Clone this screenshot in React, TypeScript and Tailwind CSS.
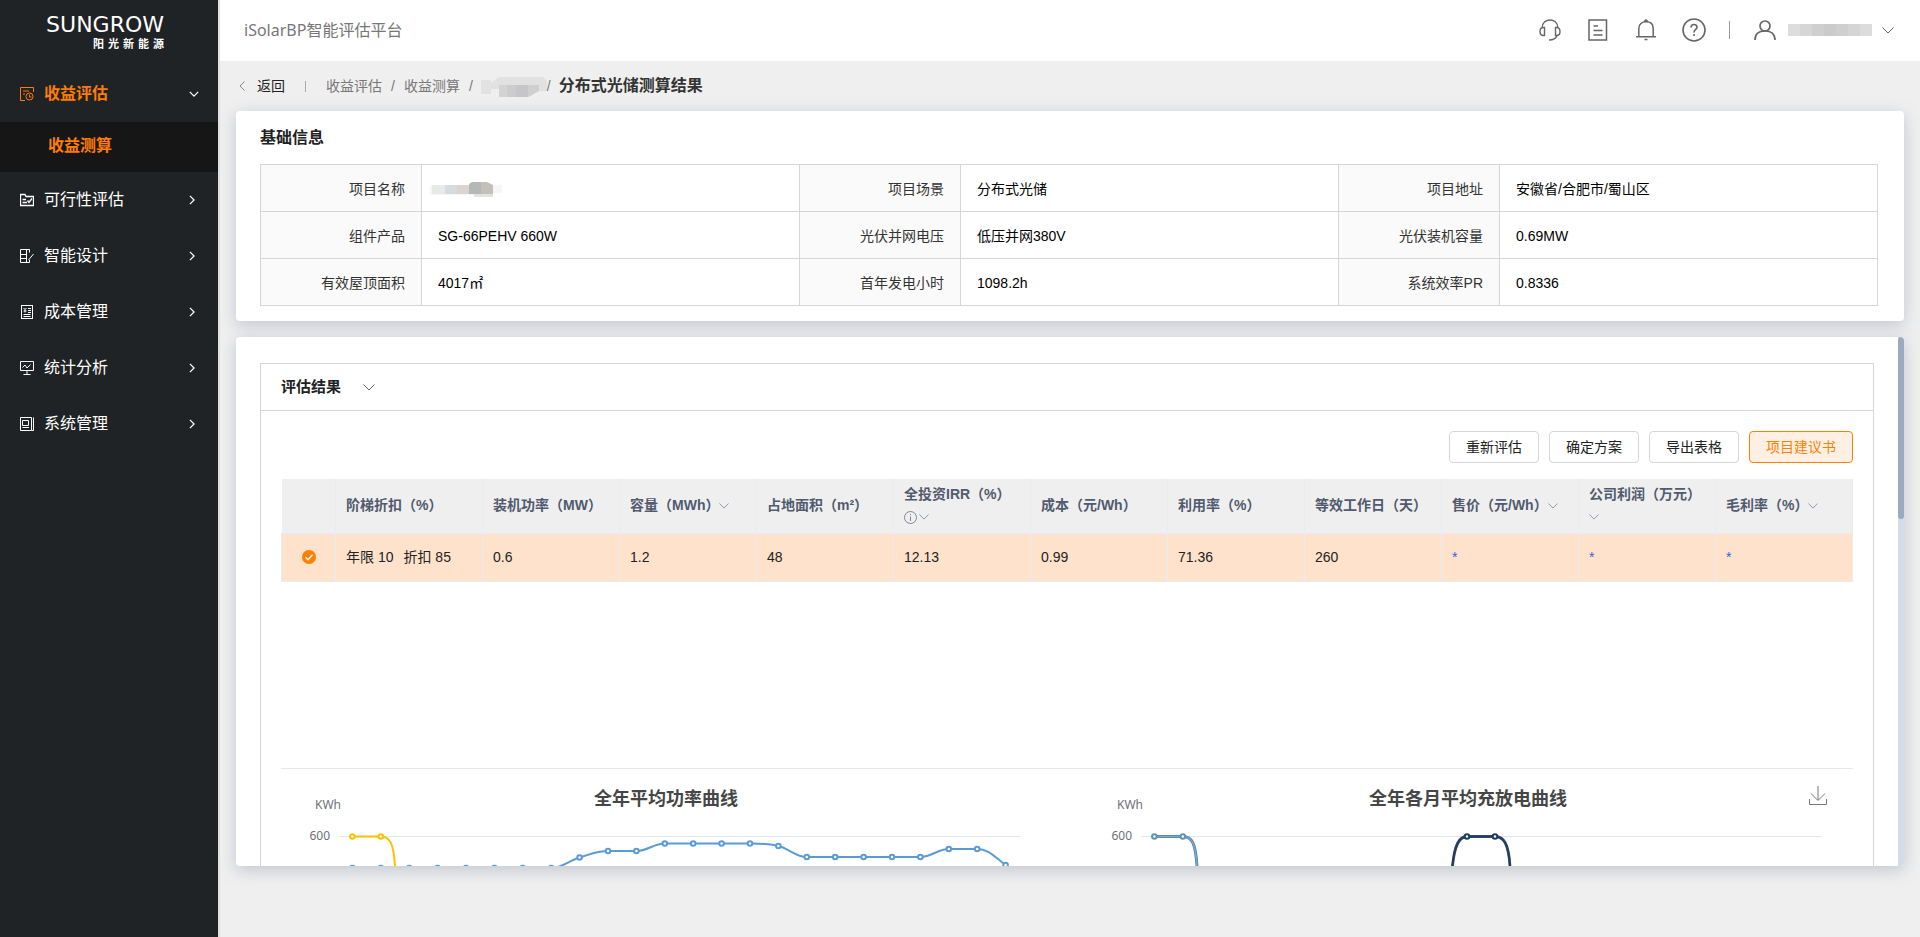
import React from "react";
import clsx from "clsx";

interface MenuItem {
  label: string;
  icon: React.ReactNode;
}

interface Column {
  title: string;
  value: React.ReactNode;
  sortable?: boolean;
  info?: boolean;
  stacked?: boolean;
  masked?: boolean;
}

const Chevron: React.FC<{ className?: string }> = ({ className }) => (
  <svg viewBox="0 0 12 7" className={className} fill="none" stroke="currentColor" aria-hidden="true">
    <path d="M0.5 0.5 L6 6 L11.5 0.5" />
  </svg>
);

const ChevronSide: React.FC<{ className?: string; d: string }> = ({ className, d }) => (
  <svg viewBox="0 0 7 12" className={className} fill="none" stroke="currentColor" strokeWidth="1.500" aria-hidden="true">
    <path d={d} />
  </svg>
);

const MenuIcon: React.FC<{ children: React.ReactNode }> = ({ children }) => (
  <svg viewBox="0 0 14 14" className="size-[14px] shrink-0" fill="none" stroke="currentColor" aria-hidden="true">
    {children}
  </svg>
);

const menu: MenuItem[] = [
  {
    label: "可行性评估",
    icon: (
      <MenuIcon>
        <path d="M0.5 12.5 V1.5 H5 L6 3.5 H13.5 V12.5 Z" strokeWidth="1.300" />
        <path d="M2.5 6.5 H6 M2.5 9.5 H7 M7.5 7.5 L9 9.5 L12 5.5" strokeWidth="1.300" />
      </MenuIcon>
    ),
  },
  {
    label: "智能设计",
    icon: (
      <MenuIcon>
        <path d="M9.5 3.5 V0.5 H0.5 V13.5 H9.5 V11 M6.5 0.5 V13.5" />
        <path d="M0.5 5.500 H6 M0.5 9.500 H6 M8.5 11 L13.5 5" />
      </MenuIcon>
    ),
  },
  {
    label: "成本管理",
    icon: (
      <MenuIcon>
        <rect x="1.5" y="0.5" width="11" height="13" />
        <path d="M3.5 3 L5 4.5 L6.5 3 M5 4.5 V7.5 M3.5 6 H6.5 M8 3.5 H11 M8 5.5 H11 M8 7.5 H11 M3.5 9.5 H10.5 M3.5 11.5 H10.5" />
      </MenuIcon>
    ),
  },
  {
    label: "统计分析",
    icon: (
      <MenuIcon>
        <path d="M0.5 0.5 H13.5 V9.500 H0.5 Z M7 10 V13.5 M3.5 13.5 H10.5" />
        <path d="M2.5 6.5 L5 4 L7 7 L10.5 3.5" />
      </MenuIcon>
    ),
  },
  {
    label: "系统管理",
    icon: (
      <MenuIcon>
        <path d="M0.5 0.5 H11.5 V13.5 H0.5 Z M13.5 0.5 V13.5 H11.5" />
        <path d="M2.5 3.5 H8.5 V8.5 H2.5 Z M2.5 10.5 H9" />
      </MenuIcon>
    ),
  },
];

const NameMask = () => (
  <svg viewBox="0 0 72 17" className="-ml-2 h-[17px] w-[72px]" aria-hidden="true">
    <path d="M0 4 H72 V12 H60 V16 H44 V14 H0 Z" fill="#f6f6f6" />
    <rect x="2" y="4" width="13" height="9" fill="#e8eaea" />
    <rect x="15" y="4" width="12" height="9" fill="#d5dbe0" />
    <rect x="27" y="4" width="12" height="9" fill="#dad3d1" />
    <path d="M39 13 V3 L42 1 H51 V13 Z" fill="#b6b8b8" />
    <path d="M51 13 V1 H57 L63 4 V13 Z" fill="#c2c0bb" />
    <rect x="44" y="13" width="19" height="3" fill="#e3e1e2" />
  </svg>
);

const basicInfo: { label: string; value: React.ReactNode }[][] = [
  [
    { label: "项目名称", value: <NameMask /> },
    { label: "项目场景", value: "分布式光储" },
    { label: "项目地址", value: "安徽省/合肥市/蜀山区" },
  ],
  [
    { label: "组件产品", value: "SG-66PEHV 660W" },
    { label: "光伏并网电压", value: "低压并网380V" },
    { label: "光伏装机容量", value: "0.69MW" },
  ],
  [
    { label: "有效屋顶面积", value: "4017㎡" },
    { label: "首年发电小时", value: "1098.2h" },
    { label: "系统效率PR", value: "0.8336" },
  ],
];

const columns: Column[] = [
  {
    title: "阶梯折扣（%）",
    value: (
      <span className="flex gap-[10px]">
        <span>年限 10</span>
        <span>折扣 85</span>
      </span>
    ),
  },
  { title: "装机功率（MW）", value: "0.6" },
  { title: "容量（MWh）", value: "1.2", sortable: true },
  { title: "占地面积（m²）", value: "48" },
  { title: "全投资IRR（%）", value: "12.13", sortable: true, info: true, stacked: true },
  { title: "成本（元/Wh）", value: "0.99" },
  { title: "利用率（%）", value: "71.36" },
  { title: "等效工作日（天）", value: "260" },
  { title: "售价（元/Wh）", value: "*", sortable: true, masked: true },
  { title: "公司利润（万元）", value: "*", sortable: true, stacked: true, masked: true },
  { title: "毛利率（%）", value: "*", sortable: true, masked: true },
];

const Sidebar = () => (
  <aside className="w-[220px] shrink-0 border-r-2 border-[#e0e0e0] bg-[#202326] text-white">
    <div className="flex h-[66px] flex-col items-end pt-[11px] pr-[54px]">
      <span className="font-['DejaVu_Sans'] text-[22px] leading-[27px]">SUNGROW</span>
      <span className="flex gap-1 text-[11px] leading-3 font-bold">
        {"阳光新能源".split("").map((c) => (
          <span key={c}>{c}</span>
        ))}
      </span>
    </div>
    <nav>
      <button className="flex h-14 w-full items-center pr-[21px] pl-5 text-base font-bold text-[#ff7d00]">
        <MenuIcon>
          <path d="M13.5 5 V0.5 H0.5 V13.5 H5" />
          <path d="M3 4 H9 M3 7 H5" />
          <circle cx="9.5" cy="9.5" r="3.5" />
          <path d="M9.5 7.5 V10 H11.5" />
        </MenuIcon>
        <span className="ml-[10px]">收益评估</span>
        <ChevronSide d="M1 1 L6 6 L1 11" className="ml-auto h-[10px] w-[6px] rotate-90 text-white" />
      </button>
      <a href="#" className="flex h-[50px] items-center bg-[#161616] pb-0.5 pl-12 text-base font-bold text-[#ff7d00]">
        收益测算
      </a>
      {menu.map((item) => (
        <button key={item.label} className="flex h-14 w-full items-center pr-[23px] pl-5 text-base">
          {item.icon}
          <span className="ml-[10px]">{item.label}</span>
          <ChevronSide d="M1 1 L6 6 L1 11" className="ml-auto h-[10px] w-[6px]" />
        </button>
      ))}
    </nav>
  </aside>
);

const nameBlocks = ["#dddddd", "#d6d6d6", "#cfcfcf", "#cbcbcb", "#cfcfcf", "#d5d5d5", "#dcdcdc"];

const Header = () => (
  <header className="flex h-[61px] shrink-0 items-center bg-white pr-[26px] pb-px pl-6 font-['Noto_Sans','Noto_Sans_CJK_SC',sans-serif] text-[#666]">
    <h1 className="text-base text-[#777]">iSolarBP智能评估平台</h1>
    <div className="ml-auto flex items-center">
      <button aria-label="客服">
        <svg viewBox="0 0 22 22" className="size-[22px]" fill="none" stroke="currentColor" strokeWidth="1.4">
          <path d="M3.2 8.5 C3.5 3.5 7 1 11 1 C15 1 18.500 3.500 18.800 8.500" />
          <path d="M5.500 8.500 H4.500 C2 8.500 1 10.500 1 12.500 C1 14.500 2 16.500 4.500 16.500 H5.500 Z" />
          <path d="M16.500 8.500 H17.500 C20 8.500 21 10.500 21 12.500 C21 14.500 20 16.500 17.500 16.500 H16.500 Z" />
          <path d="M18 16.500 C17 19.500 14.500 21 10 21" />
        </svg>
      </button>
      <button aria-label="文档" className="ml-[27px]">
        <svg viewBox="0 0 20 22" className="h-[22px] w-5" fill="none" stroke="currentColor" strokeWidth="1.500">
          <rect x="1" y="1" width="17.500" height="20" />
          <path d="M5.500 7 H10 M5.500 11.500 H14.500 M5.500 16 H14.500" />
        </svg>
      </button>
      <button aria-label="通知" className="ml-[27px]">
        <svg viewBox="0 0 22 22" className="size-[22px]" fill="none" stroke="currentColor" strokeWidth="1.500">
          <path d="M3.800 17.500 V9.500 C3.800 5 7 2.800 11 2.800 C15 2.800 18.200 5 18.200 9.500 V17.500 M1 17.800 H21 M9 2.500 L11 1 L13 2.500" />
          <path d="M9.500 20.500 H12.500" />
        </svg>
      </button>
      <button aria-label="帮助" className="ml-[25px]">
        <svg viewBox="0 0 24 24" className="size-6" fill="none" stroke="currentColor" strokeWidth="1.600">
          <circle cx="12" cy="12" r="11" />
          <path d="M9 9.500 C9 7.500 10.200 6.500 12 6.500 C13.800 6.500 15 7.500 15 9.200 C15 11.500 12 11.500 12 14.500 M12 16 V18" />
        </svg>
      </button>
      <span className="ml-[23px] h-[18px] w-px bg-[#999]" />
      <button aria-label="用户菜单" className="ml-6 flex items-center">
        <svg viewBox="0 0 22 20" className="h-5 w-[22px]" fill="none" stroke="currentColor" strokeWidth="1.700">
          <circle cx="11" cy="6" r="5" />
          <path d="M1 20 C1 14 5 11 11 11 C17 11 21 14 21 20" />
        </svg>
        <span className="ml-3 flex">
          {nameBlocks.map((color, i) => (
            <span key={i} className="h-3 w-3" style={{ backgroundColor: color }} />
          ))}
        </span>
        <Chevron className="ml-[10px] h-[7px] w-3" />
      </button>
    </div>
  </header>
);

const Breadcrumb = () => (
  <nav className="flex h-[50px] shrink-0 items-center pl-[3px] text-sm text-[#777]">
    <a href="#" className="flex items-center text-[#222]">
      <svg viewBox="0 0 6 10" className="mr-3 h-[10px] w-[6px] text-[#888]" fill="none" stroke="currentColor" aria-hidden="true">
        <path d="M5.500 0.500 L1 5 L5.500 9.500" />
      </svg>
      返回
    </a>
    <span className="mx-5 h-[11px] w-px bg-[#aaa]" />
    <a href="#">收益评估</a>
    <span className="mx-[9px]">/</span>
    <a href="#">收益测算</a>
    <span className="ml-[9px]">/</span>
    <svg viewBox="0 0 66 23" className="ml-2 h-[23px] w-[66px]" aria-hidden="true">
      <rect x="0" y="5" width="10" height="14" fill="#e2e2e2" />
      <path d="M10 8 L18 2 H62 L66 6 V16 H58 L48 22 H18 V14 H10 Z" fill="#e1e1e1" />
      <rect x="18" y="10" width="8" height="12" fill="#d3d3d3" />
      <rect x="26" y="10" width="9" height="12" fill="#cdcbcc" />
      <path d="M35 10 H47 V22 H35 Z" fill="#c6c6c8" />
      <path d="M47 10 H58 V16 L47 22 Z" fill="#cfcfd0" />
    </svg>
    <span className="mr-2">/</span>
    <strong className="text-base text-[#333]">分布式光储测算结果</strong>
  </nav>
);

const BasicInfo = () => (
  <section className="rounded bg-white pt-[15px] pr-[26px] pb-[15px] pl-6 shadow-[0_4px_16px_rgba(110,125,150,0.36)]">
    <h2 className="text-base leading-6 font-bold text-[#222]">基础信息</h2>
    <table className="mt-[14px] w-full table-fixed border-collapse text-sm">
      <tbody>
        {basicInfo.map((row, i) => (
          <tr key={i} className="h-[47px]">
            {row.map((cell) => (
              <React.Fragment key={cell.label}>
                <th className="w-[161px] border border-[#d6d6d6] bg-[#fafafa] pt-0.5 pr-4 text-right font-normal text-[#333]">
                  {cell.label}
                </th>
                <td className="border border-[#d6d6d6] pt-0.5 pl-4 text-black">{cell.value}</td>
              </React.Fragment>
            ))}
          </tr>
        ))}
      </tbody>
    </table>
  </section>
);

const ResultTable = () => (
  <table className="mt-4 w-full table-fixed border-collapse text-sm">
    <thead>
      <tr className="h-[54px] bg-[#efefef]">
        <th className="w-[54px]" />
        {columns.map((col, i) => (
          <th
            key={col.title}
            className={clsx("border-x border-[#e9ebf0] pl-[10px] text-left leading-[23px] font-bold text-[#515a6e]", i === 0 && "w-[147px]")}
          >
            <div className={clsx("flex", col.stacked ? "flex-col" : "items-center")}>
              <span className="whitespace-nowrap">{col.title}</span>
              {col.sortable && (
                <span className={clsx("flex items-center gap-0.5 text-[#808695]", col.stacked && "h-[23px]")}>
                  {col.info && (
                    <svg viewBox="0 0 13 13" className="size-[13px]" fill="none" stroke="currentColor" aria-hidden="true">
                      <circle cx="6.500" cy="6.500" r="6" />
                      <path d="M6.500 3 V4.200 M6.500 5.500 V10" />
                    </svg>
                  )}
                  <Chevron className="h-[6px] w-[10px]" />
                </span>
              )}
            </div>
          </th>
        ))}
      </tr>
    </thead>
    <tbody>
      <tr className="h-12 border border-[#e8ebf3] bg-[#ffe2cc]">
        <td>
          <label className="relative mx-auto block size-[14px]">
            <input
              type="radio"
              name="plan"
              aria-label="选择方案"
              defaultChecked
              className="block size-[14px] appearance-none rounded-full bg-[#ff8000]"
            />
            <svg viewBox="0 0 14 14" className="pointer-events-none absolute inset-0" fill="none" stroke="#fff" strokeWidth="1.300">
              <path d="M3.500 7.200 L6 9.700 L10.500 4.800" />
            </svg>
          </label>
        </td>
        {columns.map((col) => (
          <td
            key={col.title}
            className={clsx("border-x border-[#e8ebf3] pl-[10px]", col.masked ? "text-[#2b62e0]" : "text-[#222]")}
          >
            {col.value}
          </td>
        ))}
      </tr>
    </tbody>
  </table>
);

const AXIS_X = 71.4;
const STEP = 28.4;
const power = [99, 99, 99, 99, 99, 99, 99, 99, 88.5, 82, 82, 74.5, 74.5, 74.5, 74.5, 77, 88, 88, 88, 88, 88, 80, 80, 96];

const px = (i: number) => AXIS_X + i * STEP;

// smooth line that stays flat on plateaus
const smoothPath = (ys: number[]) => {
  const slope = (i: number) => {
    const a = ys[i] - ys[i - 1];
    const b = ys[i + 1] - ys[i];
    return a * b > 0 ? (a + b) / 2 : 0;
  };
  let d = `M${px(0)} ${ys[0]}`;
  for (let i = 1; i < ys.length; i++) {
    const last = i === ys.length - 1;
    const s0 = i === 1 ? 0 : slope(i - 1);
    const s1 = last ? (ys[i] - ys[i - 1]) * 1.3 : slope(i);
    d += ` C${px(i - 1) + STEP * 0.4} ${ys[i - 1] + s0 * 0.4} ${px(i) - STEP * 0.4} ${ys[i] - s1 * 0.4} ${px(i)} ${ys[i]}`;
  }
  return d;
};

const Dots: React.FC<{ points: number[][]; color: string }> = ({ points, color }) => (
  <g fill="#fff" stroke={color} strokeWidth="2">
    {points.map(([x, y]) => (
      <circle key={x} cx={x} cy={y} r="2.300" />
    ))}
  </g>
);

const ChartFrame: React.FC<{ title: string; children: React.ReactNode }> = ({ title, children }) => (
  <svg
    viewBox="0 0 770 400"
    className="w-full min-w-0 flex-1 font-['Noto_Sans','Noto_Sans_CJK_SC',sans-serif]"
    role="img"
    aria-label={title}
  >
    <text x="385" y="36" textAnchor="middle" fontSize="18" fontWeight="bold" fill="#464646">
      {title}
    </text>
    <g fontSize="12" fill="#6e7079">
      <text x="47" y="40" textAnchor="middle">
        KWh
      </text>
      <text x="49" y="71" textAnchor="end">
        600
      </text>
    </g>
    <path d="M58 67.500 H739" stroke="#e0e6f1" />
    {children}
  </svg>
);

const dropPath = "M71.400 67.500 H99.800 C109 67.500 112.500 74 114 97 C116 150 118 300 128 390";
const peakPath = "M355 390 C365 300 368 150 369.500 97 C371.500 76 376 67.500 384 67.500 H412 C421 67.500 425.500 75 427 97 C429 150 431 300 441 390";

const Charts = () => (
  <div className="relative mt-[186px] flex gap-8 border-t border-[#e6e8f0]">
    <ChartFrame title="全年平均功率曲线">
      <path d={dropPath} fill="none" stroke="#ffc000" strokeWidth="2" />
      <Dots points={[[71.4, 67.5], [99.8, 67.5]]} color="#ffc000" />
      <path d={smoothPath(power)} fill="none" stroke="#5b9bd5" strokeWidth="2" />
      <Dots points={power.map((y, i) => [px(i), y])} color="#5b9bd5" />
    </ChartFrame>
    <ChartFrame title="全年各月平均充放电曲线">
      <path d={dropPath} fill="none" stroke="#5f7f86" strokeWidth="3" />
      <path d={dropPath} fill="none" stroke="#6faade" strokeWidth="1.600" />
      <Dots points={[[71.4, 67.5], [99.8, 67.5]]} color="#5c93b8" />
      <path d={peakPath} fill="none" stroke="#55564a" strokeWidth="2.800" />
      <path d={peakPath} fill="none" stroke="#1c3d70" strokeWidth="2" />
      <Dots points={[[384, 67.5], [412, 67.5]]} color="#1c3a66" />
    </ChartFrame>
    <button aria-label="下载" className="absolute top-[17px] right-[26px] text-[#777]">
      <svg viewBox="0 0 18 19" className="h-[19px] w-[18px]" fill="none" stroke="currentColor">
        <path d="M9 0 V14 M2 7.500 L9 14.500 L16 7.500 M0.500 13 V18.500 H17.500 V13" />
      </svg>
    </button>
  </div>
);

const Results = () => (
  <section className="relative min-h-0 flex-1 overflow-hidden rounded bg-white pr-[30px] pl-6">
    <div className="mt-[26px] border border-[#d6d6d6]">
      <div className="flex h-[47px] items-center border-b border-[#d6d6d6] px-5">
        <h2 className="text-[15px] font-bold text-[#222]">评估结果</h2>
        <button aria-label="收起" className="ml-[22px] text-[#666]">
          <Chevron className="h-[7px] w-3" />
        </button>
      </div>
      <div className="px-5 pt-5">
        <div className="flex justify-end gap-[10px] text-sm text-[#222]">
          {["重新评估", "确定方案", "导出表格"].map((label) => (
            <button key={label} className="h-8 rounded border border-[#d6d6d6] bg-white px-4">
              {label}
            </button>
          ))}
          <button className="h-8 rounded border border-[#ff8000] bg-[#fff0e3] px-4 text-[#ff8000]">项目建议书</button>
        </div>
        <ResultTable />
        <Charts />
      </div>
    </div>
    {/* scrollbar */}
    <div className="absolute inset-y-0 right-0 w-[6px] bg-[#d3dce8]">
      <div className="h-[182px] rounded-full bg-[#9aaac3]" />
    </div>
  </section>
);

const App: React.FC = () => {
  return (
    <div className="flex h-screen bg-[#efefef] font-['Liberation_Sans','Noto_Sans_CJK_SC',sans-serif]">
      <Sidebar />
      <div className="flex min-w-0 flex-1 flex-col">
        <Header />
        <main className="flex min-h-0 flex-1 flex-col px-4 pb-[71px]">
          <Breadcrumb />
          <BasicInfo />
          <div className="mt-4 flex min-h-0 flex-1 flex-col rounded shadow-[0_4px_16px_rgba(110,125,150,0.36)]">
            <Results />
          </div>
        </main>
      </div>
    </div>
  );
};

export default App;
